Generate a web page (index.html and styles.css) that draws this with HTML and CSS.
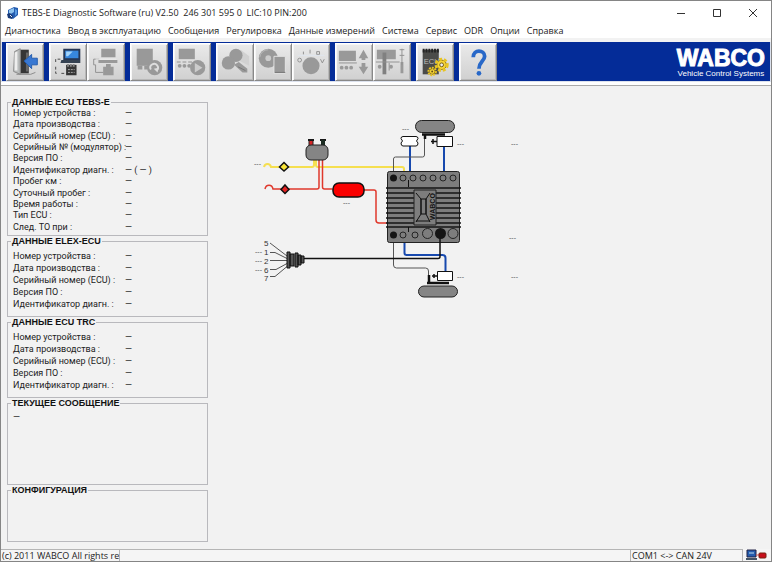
FILE: index.html
```html
<!DOCTYPE html>
<html lang="ru">
<head>
<meta charset="utf-8">
<title>TEBS-E Diagnostic Software</title>
<link rel="stylesheet" href="styles.css">
</head>
<body>
<div class="window">
  <header class="titlebar">
    <svg class="app-icon" viewBox="0 0 13 14" aria-hidden="true">
      <path d="M2 4l6-3 4 1v7l-5 4-5-3z" fill="#245cb0"/><path d="M3 4l5-2v4l-5 3z" fill="#8fc4ef"/><path d="M1 8l3-1 3 3-1 3-4-1z" fill="#183a78"/><path d="M9 3l2 1v4l-2 2z" fill="#5a9be0"/><path d="M4 9l2 2" stroke="#dce9f8"/>
    </svg>
    <h1 class="title">TEBS-E Diagnostic Software (ru) V2.50&nbsp; 246 301 595 0&nbsp; LIC:10 PIN:200</h1>
    <div class="window-buttons">
      <button type="button" aria-label="Свернуть"><svg viewBox="0 0 10 10"><path d="M1 5.500h8"/></svg></button>
      <button type="button" aria-label="Развернуть"><svg viewBox="0 0 10 10"><path d="M1.500 1.500h7v7h-7z"/></svg></button>
      <button type="button" aria-label="Закрыть"><svg viewBox="0 0 10 10"><path d="M1 1l8 8M9 1l-8 8"/></svg></button>
    </div>
  </header>

  <nav class="menu">
    <a href="#">Диагностика</a><a href="#">Ввод в эксплуатацию</a><a href="#">Сообщения</a><a href="#">Регулировка</a><a href="#">Данные измерений</a><a href="#">Система</a><a href="#">Сервис</a><a href="#">ODR</a><a href="#">Опции</a><a href="#">Справка</a>
  </nav>

  <div class="toolbar">
    <div class="tool-group">
      <button type="button" aria-label="Выход"><svg viewBox="0 0 38 38"><path d="M14 6h9v25h-9z" fill="#363636"/><path d="M20 9h3v20h-3z" fill="#666"/><path d="M8 8l6-3v27l-7-3z" fill="#b9bcbc" stroke="#888"/><path d="M8 9l3-1v20H8z" fill="#eee"/><path d="M10 32h15l5-2" stroke="#888" fill="none"/><path d="M18 18l8-7v4h6v7h-6v4z" fill="#3978d2" stroke="#245cae"/></svg></button>
    </div>
    <div class="tool-group">
      <button type="button" aria-label="Подключение ECU"><svg viewBox="0 0 38 38"><path d="M14 5h18v12H14z" fill="#263653"/><path d="M16 7h14v8H16z" fill="#3787de"/><path d="M17 8h7l-5 5h-2z" fill="#a4d4fa"/><path d="M12 17h20v3H11z" fill="#344151"/><path d="M11 16H6v5M6 24v7h3M12 31h4" fill="none" stroke="#444" stroke-dasharray="3 2"/><path d="M17 22h11v11H17z" fill="#353535"/><path d="M18 21h2v3h-2zM21 21h2v3h-2zM24 21h2v3h-2z" fill="#888"/><path d="M19 27h7M19 30h7" stroke="#aaa" stroke-dasharray="2 1"/></svg></button>
      <button type="button" aria-label="Отключение ECU"><svg viewBox="0 0 38 38" class="muted"><path d="M14 5h15v9H14zM11 17h20v3H11zM16 24h11v9H16zM19 21h5v3h-5z"/><path d="M12 16H6v6h2v8h8" class="line"/><path d="M8 16h22" stroke="#eee"/></svg></button>
    </div>
    <div class="tool-group">
      <button type="button" aria-label="Ввод в эксплуатацию"><svg viewBox="0 0 38 38" class="muted"><path d="M6 5h17v18H6z"/><path d="M7 23h5v4H7zM14 23h5v4h-5z"/><circle cx="25" cy="25" r="8"/><path d="M21 27a4 4 0 1 1 6 1" stroke="#ddd" stroke-width="2" fill="none"/><path d="M24 26l5-1-1 5z" fill="#ddd"/></svg></button>
    </div>
    <div class="tool-group">
      <button type="button" aria-label="Проверка"><svg viewBox="0 0 38 38" class="muted"><path d="M5 5h17v11H5z"/><path d="M3 19h20" class="line" stroke-dasharray="4 2"/><circle cx="6" cy="23" r="2"/><circle cx="11" cy="23" r="2"/><circle cx="16" cy="23" r="2"/><circle cx="25" cy="25" r="8"/><path d="M22 20l8 5-8 5z" fill="#ccc"/></svg></button>
    </div>
    <div class="tool-group">
      <button type="button" aria-label="Поиск ошибок"><svg viewBox="0 0 38 38" class="muted"><path d="M25 6l9 7v10l-10-5z" fill="#d1d1d1"/><circle cx="20" cy="12" r="7"/><circle cx="12" cy="20" r="7"/><path d="M18 22l5-3 9 7v4h-5z"/><path d="M22 24l8 4" stroke="#777"/></svg></button>
      <button type="button" aria-label="Диск"><svg viewBox="0 0 38 38" class="muted"><circle cx="14" cy="15" r="10"/><circle cx="14" cy="15" r="3" fill="#ccc"/><path d="M5 14a9 9 0 0 1 9-8" stroke="#bbb" fill="none"/><path d="M20 13h12v18H20z" stroke="#e6e6e6"/><path d="M21 30h11" stroke="#777"/></svg></button>
      <button type="button" aria-label="Параметры"><svg viewBox="0 0 38 38" class="muted"><circle cx="19" cy="23" r="9"/><path d="M18 6v4M11 8v3M25 8h3v3h-3zM29 16l2 4 2-4" class="line"/><path d="M5 12h28" stroke="#dfe6ee"/><circle cx="7" cy="17" r="2" class="line"/></svg></button>
    </div>
    <div class="tool-group">
      <button type="button" aria-label="Уровень"><svg viewBox="0 0 38 38" class="muted"><path d="M3 7h18v11H3zM24 15l5-9 5 9h-3v2h-4v-2zM27 20h4v4h3l-5 8-5-8h3z"/><path d="M3 20h19" class="line"/><circle cx="6" cy="25" r="2"/><circle cx="11" cy="25" r="2"/><circle cx="16" cy="25" r="2"/></svg></button>
      <button type="button" aria-label="Измерение"><svg viewBox="0 0 38 38" class="muted"><path d="M3 6h20v10H3zM28 19h3v12h-3z"/><path d="M9 9h4v23H9z" fill="#808080"/><path d="M2 19h25M29.500 5v17M27 6h5M27 12h5M16 20v8" class="line"/><circle cx="6" cy="24" r="2"/><circle cx="18" cy="24" r="2"/></svg></button>
    </div>
    <div class="tool-group">
      <button type="button" aria-label="Параметры ECU"><svg viewBox="0 0 38 38"><path d="M6 6h17v26H6z" fill="#4b4b49"/><path d="M6 7h17" fill="none" stroke="#242424" stroke-width="4" stroke-dasharray="2 1"/><text x="7" y="21" class="chip-label">ECU</text><g fill="#f6d536" stroke="#8c6e16"><circle cx="26" cy="22" r="5"/><circle cx="16" cy="29" r="3"/></g><g fill="none" stroke="#e8c422"><circle cx="26" cy="22" r="6" stroke-width="3" stroke-dasharray="3 2"/><circle cx="16" cy="29" r="4" stroke-width="2" stroke-dasharray="2 1"/></g><circle cx="26" cy="22" r="2" fill="#eee" stroke="#6d5715"/><circle cx="16" cy="29" r="1" fill="#654f16"/></svg></button>
    </div>
    <div class="tool-group">
      <button type="button" aria-label="Помощь"><svg viewBox="0 0 38 38"><path d="M14 14c0-9 12-8 12-1 0 5-6 6-6 13" fill="none" stroke="#2868c8" stroke-width="4"/><circle cx="20" cy="31" r="2.500" fill="#2868c8"/></svg></button>
    </div>
    <div class="brand"><strong>WABCO</strong><span>Vehicle Control Systems</span></div>
  </div>

  <div class="workspace">
    <aside class="sidebar">
      <fieldset class="panel panel-main">
        <legend>ДАННЫЕ ECU TEBS-E</legend>
        <dl class="rows rows-main">
          <dt>Номер устройства :</dt><dd>—</dd><dt>Дата производства :</dt><dd>—</dd><dt>Серийный номер (ECU) :</dt><dd>—</dd><dt>Серийный № (модулятор) :</dt><dd>—</dd><dt>Версия ПО :</dt><dd>—</dd><dt>Идентификатор диагн. :</dt><dd>— ( — )</dd><dt>Пробег км :</dt><dd>—</dd><dt>Суточный пробег :</dt><dd>—</dd><dt>Время работы :</dt><dd>—</dd><dt>Тип ECU :</dt><dd>—</dd><dt>След. ТО при :</dt><dd>—</dd>
        </dl>
      </fieldset>
      <fieldset class="panel panel-short">
        <legend>ДАННЫЕ ELEX-ECU</legend>
        <dl class="rows rows-loose">
          <dt>Номер устройства :</dt><dd>—</dd><dt>Дата производства :</dt><dd>—</dd><dt>Серийный номер (ECU) :</dt><dd>—</dd><dt>Версия ПО :</dt><dd>—</dd><dt>Идентификатор диагн. :</dt><dd>—</dd>
        </dl>
      </fieldset>
      <fieldset class="panel panel-short">
        <legend>ДАННЫЕ ECU TRC</legend>
        <dl class="rows rows-loose">
          <dt>Номер устройства :</dt><dd>—</dd><dt>Дата производства :</dt><dd>—</dd><dt>Серийный номер (ECU) :</dt><dd>—</dd><dt>Версия ПО :</dt><dd>—</dd><dt>Идентификатор диагн. :</dt><dd>—</dd>
        </dl>
      </fieldset>
      <fieldset class="panel panel-message"><legend>ТЕКУЩЕЕ СООБЩЕНИЕ</legend><p>—</p></fieldset>
      <fieldset class="panel panel-config"><legend>КОНФИГУРАЦИЯ</legend></fieldset>
    </aside>

    <main class="diagram">
      <svg viewBox="208 82 563 458" role="img" aria-label="Схема тормозной системы">
        <!-- supply lines -->
        <g fill="none" stroke="#f5df50" stroke-width="2">
          <path d="M264 167c1-4 6-4 7 0h41q2 0 2-2v-6M316 159v6q0 2 2 2h84q2 0 2 2v4"/>
        </g>
        <g fill="none" stroke="#e0382c" stroke-width="1.500">
          <path d="M265 189c1-5 7-5 8 0h44q2 0 2-2v-28M322.500 159v28q0 2 2 2h8M364 190h10q2 0 2 2v28q0 3 3 3h9"/>
        </g>
        <path d="M284 162.500l4.500 4.500-4.500 4-4.500-4z" fill="#f9e437" stroke="#111" stroke-width="1.500"/>
        <path d="M285 185l4 4.500-4 4-4-4z" fill="#e52323" stroke="#111" stroke-width="1.500"/>
        <!-- valve and reservoir -->
        <path d="M309 140h4v6h-4z" fill="#d52626" stroke="#222"/><path d="M308 140h6M320 140h6" stroke="#171717" stroke-width="2"/><path d="M321 140h4v6h-4z" fill="#1b2c22"/>
        <rect x="306" y="145" width="22" height="15" rx="5" fill="#858585" stroke="#222"/>
        <rect x="333" y="183" width="31" height="14" rx="6" fill="#fa0000" stroke="#111" stroke-width="1.500"/>
        <!-- hoses above and below the modulator -->
        <g fill="none" stroke="#1749ae" stroke-width="2"><path d="M410 146v27M444 146v27M404.500 242v11q0 2 2 2h36q3 0 3 3v14"/></g>
        <g fill="none" stroke="#555"><path d="M393.500 176v-17q0-2 2-2h27q2 0 2-2v-18M393.500 238v27q0 3 3 3h29q3 0 3 3v8"/></g>
        <!-- wheels and brake cylinders -->
        <g fill="#858585" stroke="#222"><rect x="415.500" y="120.500" width="39" height="12" rx="6"/><rect x="418.500" y="286" width="39" height="11" rx="5.500"/></g>
        <path d="M422 134.500h23M425 134v5M427 283h22M429 275v8" stroke="#111" stroke-width="2.500" fill="none"/>
        <g fill="#fff" stroke="#111"><path d="M403 136.500h13q2 0 2 2l-1.500 2.500 1.500 2q0 3-2 3h-13q-2 0-2-3l1.500-2-1.500-2.500q0-2 2-2z"/><path d="M437 136.500h15.500v10H437zM437.500 271.500h15v9h-15z"/></g>
        <path d="M431 141.500h6M432 276h6M433 139v5M434 274v4" stroke="#111" stroke-width="1.500"/>
        <!-- modulator -->
        <rect x="387.500" y="171.500" width="72" height="71" rx="2" fill="#7d7d7d" stroke="#222"/>
        <path d="M304 258.500h134q2 0 2-2v-19" fill="none" stroke="#111" stroke-width="1.500"/>
        <path d="M386 188h75M386 193h75M386 198h75M386 203h75M386 208h75M386 213h75M386 218h75M386 223h75M386 227h75" stroke="#151515" stroke-width="1.500"/>
        <path d="M414 190h22v35h-22z" fill="#7d7d7d" stroke="#222"/>
        <path d="M408.500 180v7M408.500 227v5M416 193l5 6v15l-5 8M430 193l-4 6v15l4 8M421 199h5v15h-5zM416 221h14" fill="none" stroke="#111"/>
        <text class="device-label" transform="translate(435 220) rotate(-90)">WABCO</text>
        <g fill="none" stroke="#242424"><circle cx="403" cy="178" r="3"/><circle cx="413" cy="178" r="3"/><circle cx="423" cy="178" r="3"/><circle cx="433" cy="178" r="3"/><circle cx="443" cy="178" r="3"/><circle cx="453" cy="178" r="3"/><circle cx="403" cy="235" r="3"/><circle cx="415" cy="235" r="3"/><circle cx="427.500" cy="233.500" r="5"/><circle cx="453" cy="233.500" r="5"/></g>
        <g fill="#151515"><circle cx="393.500" cy="178" r="3.500"/><circle cx="393.500" cy="235" r="3.500"/><circle cx="440.500" cy="233.500" r="5.500"/></g>
        <!-- cable plug with its contacts -->
        <g fill="none" stroke="#555"><path d="M270 243l17 13M270 252.500h5l12 6M270 260.500h17M270 269.500h6l11-6M270 276.500h5l12-10"/></g>
        <path d="M287 252h3v16h-3zM290 254h4v12h-4zM295 253h3v14h-3zM298 255h3v10h-3zM301 256h3v7h-3z" fill="#555" stroke="#111"/>
        <g class="pin-label"><text x="264" y="246">5</text><text x="264" y="255">1</text><text x="264" y="264">2</text><text x="264" y="273">6</text><text x="264" y="281">7</text></g>
        <g class="reading"><text x="254" y="166">---</text><text x="343" y="205">---</text><text x="402" y="131">---</text><text x="457" y="146">---</text><text x="511" y="146">---</text><text x="509" y="240">---</text><text x="457" y="279">---</text><text x="511" y="279">---</text><text x="255" y="254">---</text><text x="255" y="263">---</text><text x="255" y="272">---</text></g>
      </svg>
    </main>
  </div>

  <footer class="statusbar">
    <span class="status-cell copyright">(c) 2011 WABCO All rights re</span>
    <span class="status-cell status-fill"></span>
    <span class="status-cell status-port">COM1 &lt;-&gt; CAN 24V</span>
    <svg class="status-icon" viewBox="0 0 26 12" aria-hidden="true"><path d="M3 1h9v7H3z" fill="#245cae" stroke="#224"/><path d="M5 4h5" stroke="#bde"/><path d="M2 9h11v2H2z" fill="#456"/><path d="M12 6h4" stroke="#d55"/><rect x="15" y="4" width="7" height="5" rx="1" fill="#c70e1b" stroke="#721"/></svg>
  </footer>
</div>
</body>
</html>
```
FILE: styles.css
```css
* { box-sizing: border-box; }

body {
  margin: 0;
  background: #f2f2f2;
  color: #222;
  font: 9px/12px "Open Sans", "Noto Sans", sans-serif;
}

button { padding: 0; border: 0; background: none; }
svg { display: block; }

.window {
  display: flex;
  flex-direction: column;
  min-height: 100vh;
  border: 1px solid #858585;
}

.titlebar {
  display: flex;
  align-items: center;
  height: 23px;
  padding-left: 5px;
  background: #fff;
}
.app-icon { width: 13px; height: 14px; margin-right: 3px; }
.title { margin: 0; font-size: 9px; font-weight: 400; white-space: nowrap; }
.window-buttons { display: flex; margin-left: auto; }
.window-buttons button { display: grid; place-items: center; width: 36px; height: 22px; }
.window-buttons svg { width: 10px; height: 10px; fill: none; stroke: #333; }

.menu {
  display: flex;
  gap: 7px;
  height: 14px;
  padding-left: 4px;
  background: #fff;
  line-height: 14px;
  white-space: nowrap;
}
.menu a { color: #222; text-decoration: none; }

.toolbar {
  display: flex;
  gap: 5px;
  margin-top: 4px;
  padding: 1px 5px 0 4px;
  border: 1px solid #dce2ee;
  border-top: 0;
  background: #042c98;
  box-shadow: 0 3px #fff, 0 4px #aaa;
}
.tool-group { display: flex; }
.tool-group button {
  width: 38px;
  height: 38px;
  border: 1px solid;
  border-color: #fff #888 #888 #fff;
  background: linear-gradient(#eaeaea, #d0d0d0);
  box-shadow: inset 1px 1px #f6f6f6, inset -1px -1px #b8b8b8;
}
.tool-group svg { width: 36px; height: 36px; }
.muted { fill: #999; }
.muted .line { fill: none; stroke: #909090; }
.chip-label { fill: #bbb; font: 8px "Liberation Sans", sans-serif; }

.brand {
  display: flex;
  flex-direction: column;
  align-items: center;
  margin-left: auto;
  padding-top: 5px;
  color: #fff;
  font-family: "Liberation Sans", Arial, sans-serif;
}
.brand strong { font-size: 23px; line-height: 21px; -webkit-text-stroke: 1px #fff; }
.brand span { font-size: 8px; line-height: 9px; }

.workspace { display: flex; flex: 1; padding-top: 15px; }
.sidebar { flex: none; width: 207px; padding-left: 6px; }
.panel {
  min-width: 0;
  margin: 0;
  padding: 0 5px;
  border: 1px solid #b9b9bd;
  font: 9px/11px Roboto, "Liberation Sans", sans-serif;
}
.panel legend {
  height: 10px;
  padding: 0 1px;
  margin-left: -2px;
  color: #111;
  font-family: "Liberation Sans", Arial, sans-serif;
  font-weight: 700;
  line-height: 10px;
}
.rows { display: grid; grid-template-columns: 112px 1fr; margin: 0; white-space: nowrap; }
.rows dd { margin: 0; }
.rows-main { grid-auto-rows: 1fr; min-height: 126px; padding-top: 1px; }
.rows-loose { row-gap: 1px; padding-top: 5px; }
.panel p { margin: 4px 0; }
.panel-main { min-height: 139px; }
.panel-short { min-height: 81px; }
.panel-message { min-height: 87px; }
.panel-config { min-height: 57px; }

.diagram { flex: 1; min-width: 0; margin-top: -15px; }
.diagram svg { width: 100%; height: auto; }
.pin-label { fill: #333; font: 8px "Liberation Sans", sans-serif; }
.reading { fill: #555; font: 7px "Liberation Sans", sans-serif; }
.device-label { fill: #111; font: bold 7px "Liberation Sans", sans-serif; }

.statusbar { display: flex; height: 12px; background: #f5f5f5; }
.status-cell { height: 12px; border-top: 1px solid #b5b5b5; border-right: 1px solid #b5b5b5; overflow: hidden; line-height: 11px; white-space: nowrap; }
.copyright { min-width: 119px; padding-left: 1px; }
.status-fill { flex: 1; }
.status-port { width: 112px; padding-left: 1px; }
.status-icon { width: 28px; height: 12px; }
```
